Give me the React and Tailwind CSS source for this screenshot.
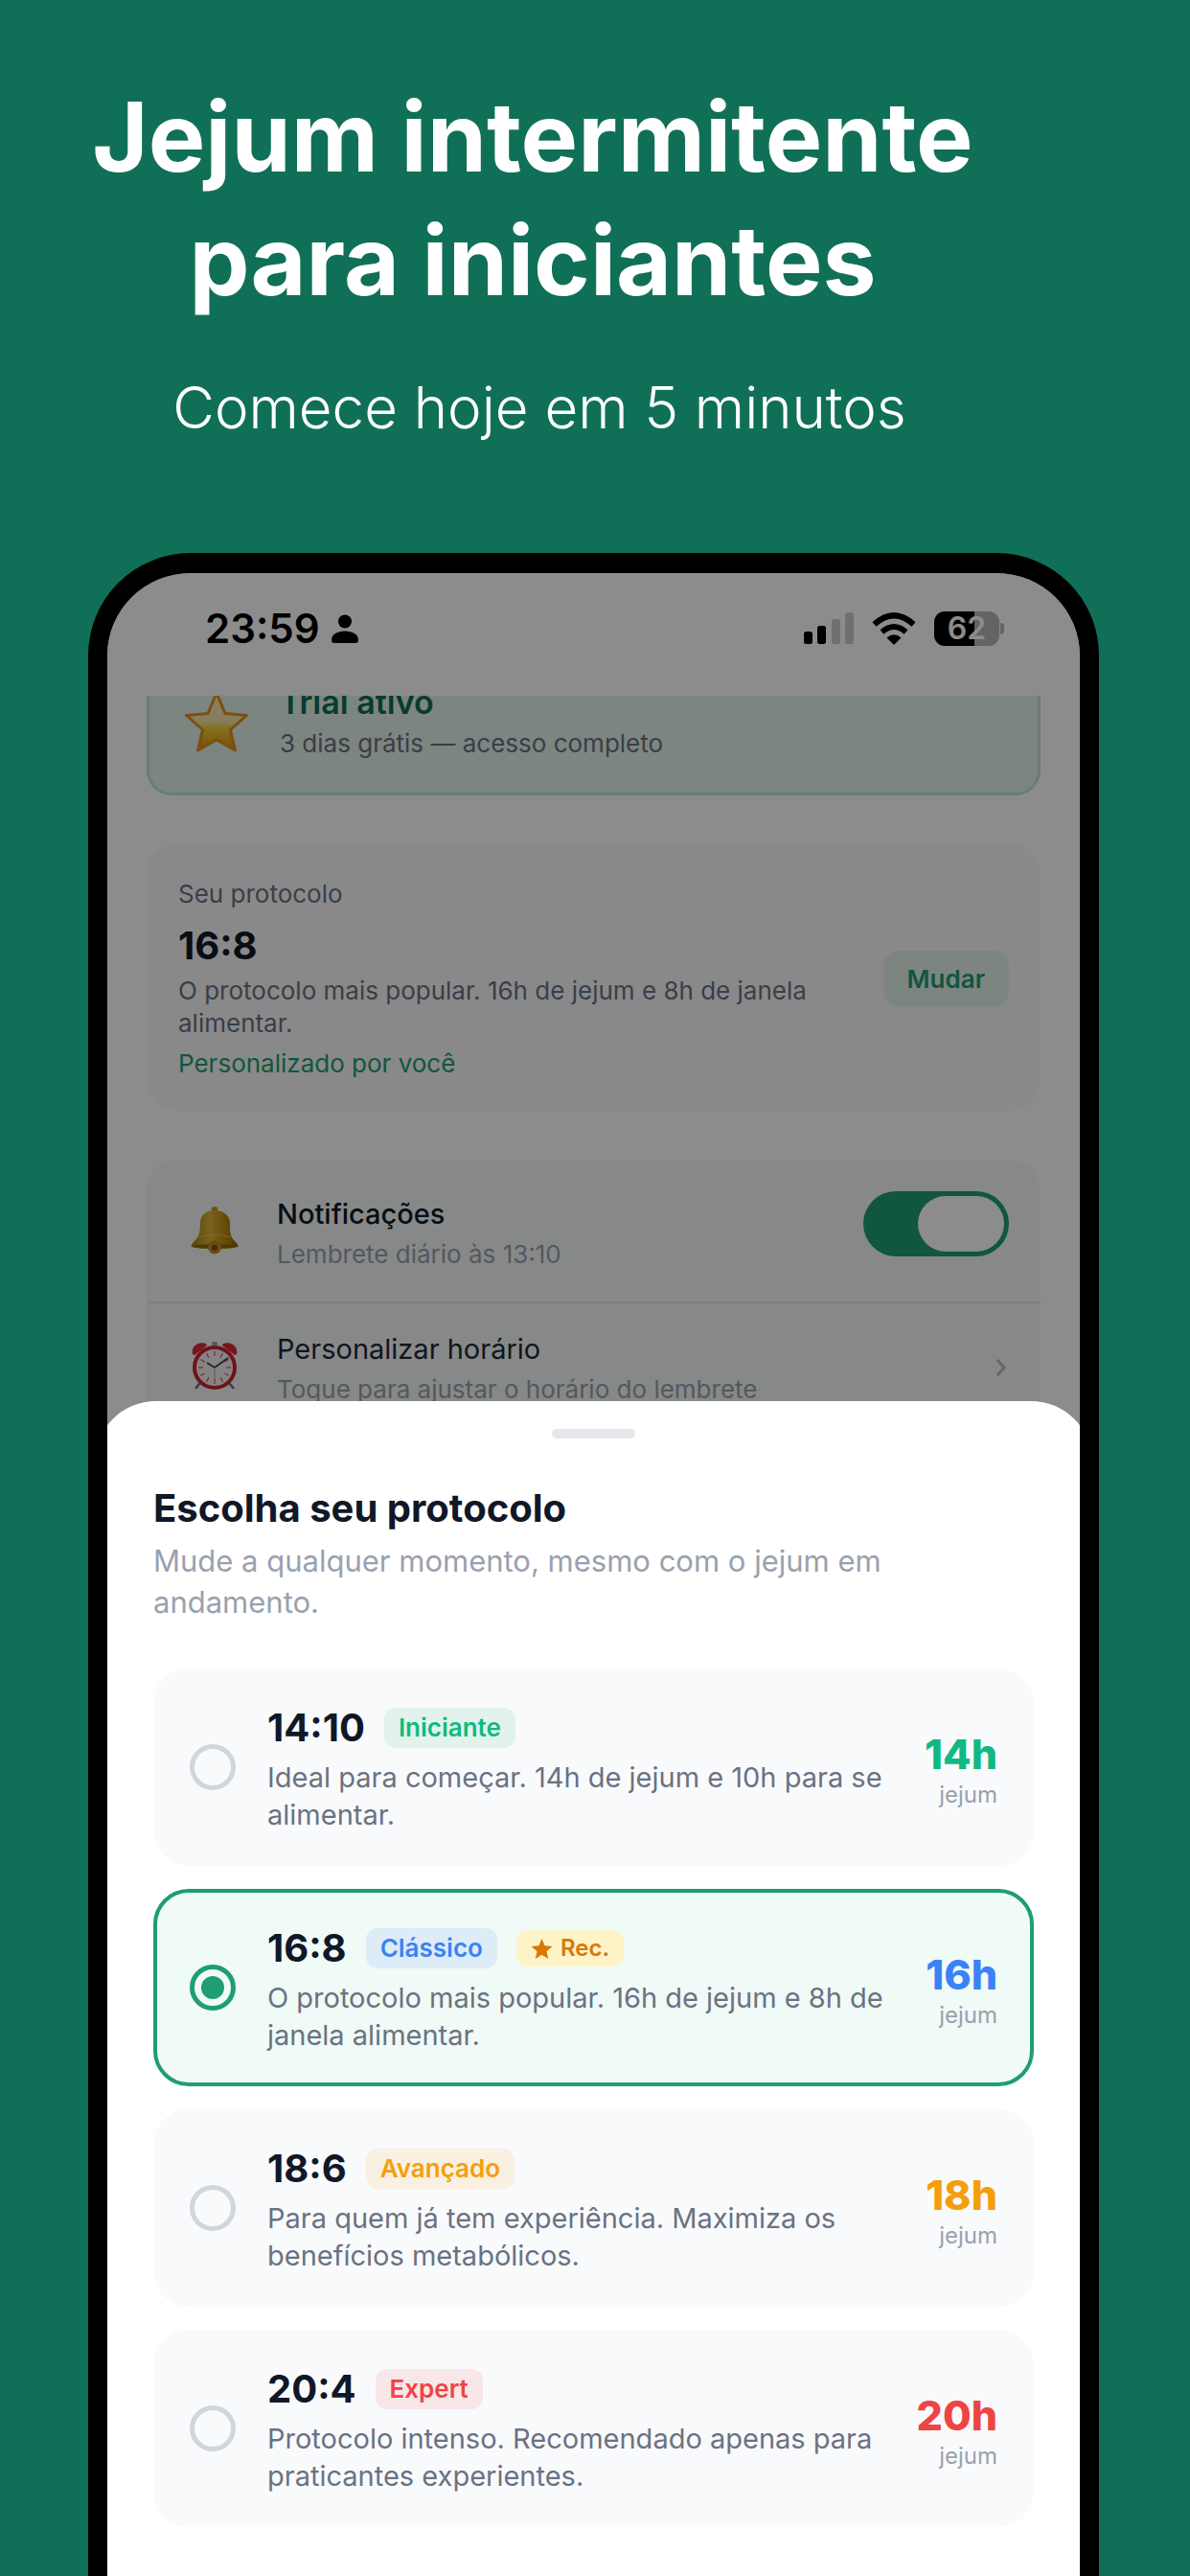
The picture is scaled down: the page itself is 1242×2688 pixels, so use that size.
import { useState } from "react";

const protocols = [
  { id: "14:10", level: "Iniciante", hours: "14h", text: "Ideal para começar. 14h de jejum e 10h para se alimentar.", badge: "bg-[#e1f3ec] text-[#10b981]", hour: "text-[#10b981]" },
  { id: "16:8", level: "Clássico", hours: "16h", rec: true, text: "O protocolo mais popular. 16h de jejum e 8h de janela alimentar.", badge: "bg-[#ddecf6] text-[#3b82f6]", hour: "text-[#3b82f6]" },
  { id: "18:6", level: "Avançado", hours: "18h", text: "Para quem já tem experiência. Maximiza os benefícios metabólicos.", badge: "bg-[#f9f0e2] text-[#f59e0b]", hour: "text-[#f59e0b]" },
  { id: "20:4", level: "Expert", hours: "20h", text: "Protocolo intenso. Recomendado apenas para praticantes experientes.", badge: "bg-[#f8e7e9] text-[#ef4444]", hour: "text-[#ef4444]" },
];

function StarEmoji() {
  return (
    <svg viewBox="0 0 68 66" className="h-[66px] w-[68px] shrink-0" aria-hidden="true">
      <defs>
        <linearGradient id="star-fill" x1="0" y1="0" x2="0" y2="1">
          <stop offset="0" stopColor="#fdeec0" />
          <stop offset="0.5" stopColor="#f3e3a4" />
          <stop offset="0.62" stopColor="#f0cf3a" />
          <stop offset="1" stopColor="#dc8f0a" />
        </linearGradient>
      </defs>
      <path d="M34 3 L43 24.500 L65.500 26.500 L48.500 41.500 L53.500 63 L34 52 L14.500 63 L19.500 41.500 L2.500 26.500 L25 24.500 Z" fill="url(#star-fill)" stroke="#dd931f" strokeWidth="3" strokeLinejoin="round" />
    </svg>
  );
}

function BellEmoji() {
  return (
    <svg viewBox="0 0 50 50" className="h-[50px] w-[50px]" aria-hidden="true">
      <defs>
        <linearGradient id="bell-fill" x1="0" y1="0" x2="1" y2="0">
          <stop offset="0" stopColor="#a8790a" />
          <stop offset="0.4" stopColor="#dcb53a" />
          <stop offset="0.7" stopColor="#c0900f" />
          <stop offset="1" stopColor="#8a6207" />
        </linearGradient>
      </defs>
      <circle cx="25" cy="3.500" r="3.500" fill="#c9971c" />
      <path d="M25 4 C15 4 10 10 10 17 C10 27 9 31 4 36 C1 39 0 41 1 42 C8 45 42 45 49 42 C50 41 49 39 46 36 C41 31 41 27 41 17 C41 10 35 4 25 4 Z" fill="url(#bell-fill)" />
      <ellipse cx="25" cy="41.500" rx="22" ry="2.500" fill="#8c6a06" />
      <path d="M8 32 Q25 27 42 32" fill="none" stroke="#f0cf63" strokeWidth="1" opacity="0.7" />
      <circle cx="25" cy="42.500" r="7" fill="#c08a22" />
      <circle cx="25" cy="43" r="3" fill="#7e4f16" />
    </svg>
  );
}

function ClockEmoji() {
  const ticks = [0, 30, 60, 90, 120, 150, 180, 210, 240, 270, 300, 330];
  return (
    <svg viewBox="0 0 50 50" className="h-[50px] w-[50px]" aria-hidden="true">
      <path d="M10 43 L5 49 M40 43 L45 49" stroke="#6b7280" strokeWidth="2.500" />
      <rect x="22" y="0" width="6" height="4" rx="1.500" fill="#9ca3af" />
      <path d="M2 13 C0 5 8 -1 16 2 L17 4 L4 14 Z M48 13 C50 5 42 -1 34 2 L33 4 L46 14 Z" fill="#d52b40" />
      <circle cx="25" cy="27" r="21" fill="#f1f1f3" stroke="#cf2230" strokeWidth="4" />
      {ticks.map((a) => (
        <path key={a} d="M25 10 V15" stroke="#e04a55" strokeWidth="1.200" transform={`rotate(${a} 25 27)`} />
      ))}
      <path d="M17 22 L25 27 L39 17" fill="none" stroke="#374151" strokeWidth="1.800" />
      <path d="M25 27 V41" stroke="#e8937f" strokeWidth="1" />
    </svg>
  );
}

function StatusBar() {
  return (
    <header className="flex h-[128px] items-center justify-between pr-[79px] pl-[102px] pb-3 text-black">
      <div className="flex items-center gap-3">
        <span className="text-[42px] leading-none font-semibold">23:59</span>
        <svg viewBox="0 0 28 30" className="h-[30px] w-[28px]" aria-hidden="true">
          <circle cx="14" cy="7.500" r="7" />
          <path d="M0 27 C0 21 6 17.500 14 17.500 C22 17.500 28 21 28 27 C28 29 27 30 25 30 H3 C1 30 0 29 0 27 Z" />
        </svg>
      </div>
      <div className="flex items-center gap-[19px]">
        <svg viewBox="0 0 52 34" className="h-[34px] w-[52px]" aria-hidden="true">
          <rect x="0" y="20" width="9" height="13" rx="2.500" />
          <rect x="14" y="14" width="9" height="19" rx="2.500" />
          <rect x="29" y="7" width="9" height="26" rx="2.500" opacity="0.2" />
          <rect x="43" y="0" width="9" height="33" rx="2.500" opacity="0.2" />
        </svg>
        <svg viewBox="0 0 46 34" className="h-[34px] w-[46px]" aria-hidden="true">
          <path d="M23 34 L15.500 26.500 Q23 20 30.500 26.500 Z" />
          <path d="M10.500 20.500 Q23 9.500 35.500 20.500" fill="none" stroke="#000" strokeWidth="6" />
          <path d="M2.500 12.500 Q23 -6 43.500 12.500" fill="none" stroke="#000" strokeWidth="6" />
        </svg>
        <div className="flex items-center gap-px">
          <div className="flex h-9 w-[68px] items-center justify-center rounded-[11px] bg-linear-to-r from-black from-62% to-[#b6b6b6] to-62% text-[32px] leading-none font-semibold text-white">
            62
          </div>
          <div className="h-3 w-1 rounded-r-full bg-[#b6b6b6]" />
        </div>
      </div>
    </header>
  );
}

function Settings() {
  const [on, setOn] = useState(true);
  return (
    <div className="px-[41px]">
      <div className="flex h-[104px] items-start gap-8 rounded-b-[26px] border-3 border-t-0 border-[#bde3d3] bg-[#e3f3ec] pl-9">
        <div className="-mt-[6px]"><StarEmoji /></div>
        <div className="-mt-[15px]">
          <h2 className="text-[34px] leading-[44px] font-semibold text-[#0f6e56]">Trial ativo</h2>
          <p className="text-[26px] leading-[42px] text-gray-500">3 dias grátis — acesso completo</p>
        </div>
      </div>

      <section className="mt-[50px] flex items-center justify-between rounded-[32px] bg-[#f9fafb] px-[33px] pt-9 pb-8 text-[26px] leading-[34px] text-gray-500">
        <div className="max-w-[680px]">
          <p>Seu protocolo</p>
          <h2 className="mt-[6px] text-[40px] leading-[61px] font-bold text-gray-900">16:8</h2>
          <p>O protocolo mais popular. 16h de jejum e 8h de janela alimentar.</p>
          <p className="mt-2 text-[#1f9d73]">Personalizado por você</p>
        </div>
        <button className="rounded-2xl bg-[#e3f3ec] px-[25px] py-3 text-[26px] leading-[35px] font-semibold text-[#1f9d73]">Mudar</button>
      </section>

      <section className="mt-[51px] rounded-t-[32px] bg-[#f5f9f7]">
        <div className="flex h-[150px] items-center border-b-2 border-gray-200 pr-[33px] pl-[46px]">
          <BellEmoji />
          <div className="ml-10 flex-1 pt-2">
            <h3 className="text-[29px] leading-[42px] font-medium text-gray-900">Notificações</h3>
            <p className="text-[26px] leading-[42px] text-gray-400">Lembrete diário às 13:10</p>
          </div>
          <button role="switch" aria-checked={on} aria-label="Notificações" onClick={() => setOn(!on)} className={`mb-[14px] flex h-[68px] w-[152px] rounded-full p-[5px] ${on ? "justify-end bg-[#1f9d73]" : "justify-start bg-gray-300"}`}>
            <span className="h-[58px] w-[90px] rounded-full bg-white" />
          </button>
        </div>
        <button className="flex h-[130px] w-full items-center pr-[36px] pl-[46px] text-left">
          <ClockEmoji />
          <span className="ml-10 flex-1 pt-2">
            <span className="block text-[29px] leading-[42px] text-gray-800">Personalizar horário</span>
            <span className="block text-[26px] leading-[42px] text-gray-400">Toque para ajustar o horário do lembrete</span>
          </span>
          <svg viewBox="0 0 10 18" className="mt-1 h-[18px] w-[10px]" fill="none" stroke="#b6bac2" strokeWidth="3" aria-hidden="true">
            <path d="M1 1 L8 9 L1 17" />
          </svg>
        </button>
      </section>
    </div>
  );
}

function Protocol({ item, selected, onSelect }) {
  return (
    <label className={`flex items-center rounded-[37px] border-4 py-[30px] pr-[34px] pl-[34px] ${selected ? "border-[#1f9d73] bg-[#f0faf6]" : "border-[#f9fafc] bg-[#f9fafc]"}`}>
      <input
        type="radio"
        name="protocolo"
        checked={selected}
        onChange={onSelect}
        className="grid size-12 shrink-0 appearance-none place-items-center rounded-full border-5 border-gray-300 checked:border-[#1f9d73] checked:before:size-6 checked:before:rounded-full checked:before:bg-[#1f9d73]"
      />
      <span className="ml-[33px] min-w-0 flex-1">
        <span className="flex h-14 items-center gap-5">
          <span className="text-[40px] leading-[52px] font-bold text-gray-900">{item.id}</span>
          <span className={`rounded-xl px-[15px] py-[3px] text-[26px] leading-[36px] font-semibold ${item.badge}`}>{item.level}</span>
          {item.rec && (
            <span className="flex items-center gap-2 rounded-xl bg-[#fef3c7] px-[15px] py-px text-[24px] leading-[36px] font-semibold text-[#d97706]">
              <svg viewBox="0 0 24 24" className="size-[23px]" fill="currentColor" aria-hidden="true">
                <path d="M12 1 L15.200 8.700 L23.500 9.400 L17.200 14.800 L19.100 23 L12 18.600 L4.900 23 L6.800 14.800 L0.500 9.400 L8.800 8.700 Z" />
              </svg>
              Rec.
            </span>
          )}
        </span>
        <span className="block pt-1 text-[29px] leading-[39px] text-gray-500">{item.text}</span>
      </span>
      <span className="flex w-[100px] shrink-0 flex-col items-end pt-3">
        <span className={`text-[43px] leading-[46px] font-extrabold ${item.hour}`}>{item.hours}</span>
        <span className="text-[24px] leading-[40px] text-gray-400">jejum</span>
      </span>
    </label>
  );
}

export default function App() {
  const [selected, setSelected] = useState("16:8");
  return (
    <main className="h-screen overflow-hidden bg-[#107057] font-['Inter',sans-serif]">
      <div className="flex h-full flex-col">
        <div className="h-[577px] shrink-0 pt-[78px] pr-[130px] text-center text-white">
          <h1 className="text-[100px] leading-[129px] font-bold">
            Jejum intermitente
            <br />
            para iniciantes
          </h1>
          <p className="mt-[53px] pl-[14px] text-[60px] leading-[72px] font-light">Comece hoje em 5 minutos</p>
        </div>
        <div className="mr-[95px] ml-[92px] min-h-0 flex-1 overflow-hidden rounded-t-[107px] border-x-20 border-t-[21px] border-black bg-white">
          <div className="relative h-[928px] overflow-hidden">
            <StatusBar />
            <div className="h-[800px] overflow-hidden">
              <Settings />
            </div>
            <div className="absolute inset-0 bg-black/45" />
          </div>
          <section className="relative -mx-[13px] -mt-[64px] rounded-t-[64px] bg-white px-[61px] pt-[29px]">
            <div className="mx-auto h-[10px] w-[87px] rounded-full bg-gray-200" />
            <h2 className="mt-[47px] text-[40px] leading-[52px] font-bold text-gray-900">Escolha seu protocolo</h2>
            <p className="mt-[7px] text-[31px] leading-[43px] text-gray-400">Mude a qualquer momento, mesmo com o jejum em andamento.</p>
            <div role="radiogroup" aria-label="Escolha seu protocolo" className="mt-[48px] flex flex-col gap-6">
              {protocols.map((p) => (
                <Protocol key={p.id} item={p} selected={p.id === selected} onSelect={() => setSelected(p.id)} />
              ))}
            </div>
          </section>
        </div>
      </div>
    </main>
  );
}
